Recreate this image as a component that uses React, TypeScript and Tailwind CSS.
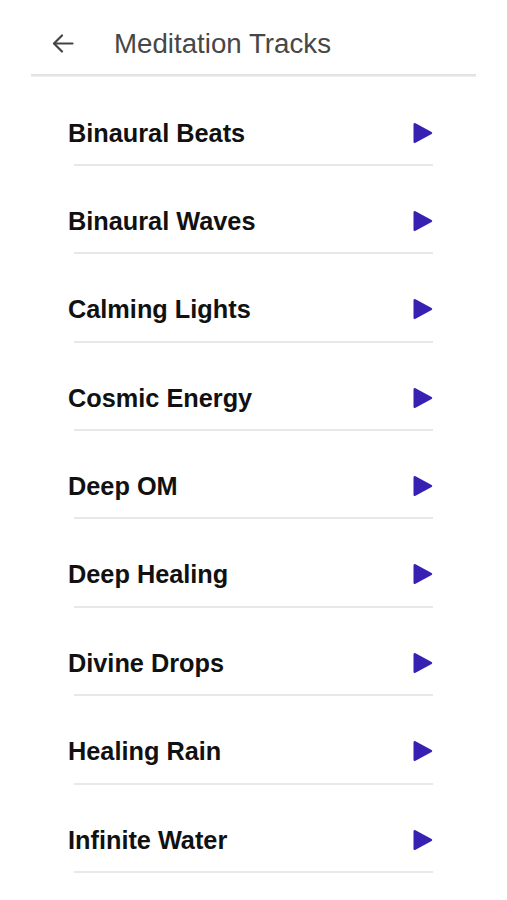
import React from "react";

const tracks = [
  "Binaural Beats",
  "Binaural Waves",
  "Calming Lights",
  "Cosmic Energy",
  "Deep OM",
  "Deep Healing",
  "Divine Drops",
  "Healing Rain",
  "Infinite Water",
];

function BackArrow() {
  return (
    <svg width="22" height="19" viewBox="0 0 22 19" fill="none">
      <path d="M20.5 9.5H2.5" stroke="#444" strokeWidth="2.2" strokeLinecap="round" />
      <path d="M10 1.5L2 9.5L10 17.5" stroke="#444" strokeWidth="2.2" strokeLinecap="round" strokeLinejoin="round" />
    </svg>
  );
}

function PlayIcon() {
  return (
    <svg width="22" height="24" viewBox="0 0 22 24">
      <path
        d="M3.5 2.2 L19.6 11 Q21 12 19.6 13 L3.5 21.8 Q1.5 22.8 1.5 20.6 L1.5 3.4 Q1.5 1.2 3.5 2.2 Z"
        fill="#3621b3"
      />
    </svg>
  );
}

export default function App() {
  return (
    <div className="w-[507px] h-[900px] bg-white overflow-hidden" style={{ fontFamily: '"Liberation Sans", Arial, sans-serif' }}>
      <div className="mx-[31px] h-[74px] flex items-center pl-[21px] pt-[13px]">
        <BackArrow />
        <span className="ml-[40px] text-[27.7px] leading-[30px] text-[#474747]">Meditation Tracks</span>
      </div>
      <div className="mx-[31px] h-[3px] bg-gradient-to-b from-[#dcdcdc] to-[#f1f1f1]" />
      <div className="mt-[0.5px]">
        {tracks.map((t) => (
          <div key={t} className="ml-[74px] w-[359px] h-[88.375px] border-b-2 border-[#e8e8e8] pt-[40px]">
            <div className="flex items-center justify-between h-[30px]">
              <span className="-ml-[6px] text-[25.3px] leading-[30px] font-bold text-[#111]">{t}</span>
              <span className="-mr-[1px] flex items-center"><PlayIcon /></span>
            </div>
          </div>
        ))}
      </div>
    </div>
  );
}
